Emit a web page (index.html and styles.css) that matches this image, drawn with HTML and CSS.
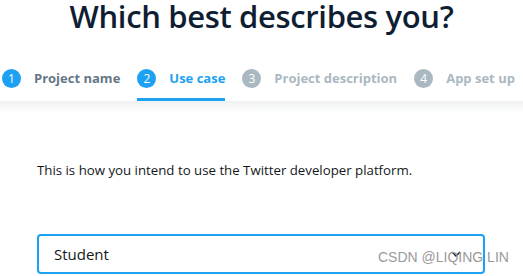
FILE: index.html
```html
<!DOCTYPE html>
<html lang="en">
<head>
    <meta charset="UTF-8" />
    <title>Which best describes you?</title>
    <link rel="stylesheet" href="styles.css">
</head>
<body>
    <div class="page">
        <h1 class="title">Which best describes you?</h1>

        <!-- Wizard steps -->
        <div class="steps">
            <div class="step done">
                <span class="step-num">1</span>
                <span class="step-label">Project name</span>
            </div>
            <div class="step active">
                <span class="step-num">2</span>
                <span class="step-label">Use case</span>
            </div>
            <div class="step">
                <span class="step-num">3</span>
                <span class="step-label">Project description</span>
            </div>
            <div class="step">
                <span class="step-num">4</span>
                <span class="step-label">App set up</span>
            </div>
        </div>

        <div class="content">
            <p class="hint">This is how you intend to use the Twitter developer platform.</p>
            <div class="select">
                <span class="select-value">Student</span>
                <svg class="chevron" width="10" height="6" viewBox="0 0 10 6">
                    <path d="M1 1l4 4 4-4" fill="none" stroke="#14171a" stroke-width="1.4"/>
                </svg>
            </div>
        </div>

        <div class="watermark">CSDN @LIQING LIN</div>
    </div>
</body>
</html>
```

FILE: styles.css
```css
:root {
    --blue: #1da1f2;
    --dark: #14171a;
    --title: #0f1e33;
    --muted: #657786;
    --light: #aab8c2;
}

* {
    margin: 0;
    padding: 0;
    box-sizing: border-box;
}

body {
    font-family: "Open Sans", "Noto Sans", sans-serif;
    background: #fff;
    color: var(--dark);
    width: 523px;
    height: 276px;
    overflow: hidden;
}

.page {
    position: relative;
    height: 276px;
}

.title {
    text-align: center;
    font-size: 31px;
    font-weight: 600;
    color: var(--title);
    line-height: 32px;
    letter-spacing: -0.35px;
}

.steps {
    display: flex;
    gap: 17px;
    padding-left: 2px;
    margin-top: 28px;
    white-space: nowrap;
    overflow: hidden;
}

.step {
    display: flex;
    align-items: center;
    gap: 13px;
    height: 41px;
    padding-bottom: 2px;
    border-bottom: 3px solid transparent;
    color: var(--light);
    font-size: 13px;
    font-weight: 700;
}

.step-num {
    width: 19px;
    height: 19px;
    border-radius: 50%;
    background: var(--light);
    color: #fff;
    font-weight: 400;
    font-size: 12px;
    display: flex;
    align-items: center;
    justify-content: center;
}

.step.done { color: var(--muted); }
.step.done .step-num { background: var(--blue); }

.step.active {
    color: var(--blue);
    border-bottom-color: var(--blue);
}
.step.active .step-num { background: var(--blue); }

.content {
    background: linear-gradient(#eff1f3, #fff 12px);
    padding: 60px 38px 0 37px;
}

.hint {
    font-size: 13.25px;
    line-height: 18px;
    margin-bottom: 55px;
}

.select {
    display: flex;
    align-items: center;
    justify-content: space-between;
    height: 40px;
    border: 2px solid var(--blue);
    border-radius: 4px;
    padding: 0 22px 0 15px;
    font-size: 15px;
}

.watermark {
    position: absolute;
    left: 378px;
    top: 249px;
    font-family: "Liberation Sans", sans-serif;
    font-size: 14px;
    color: #9a9a9a;
}
```
